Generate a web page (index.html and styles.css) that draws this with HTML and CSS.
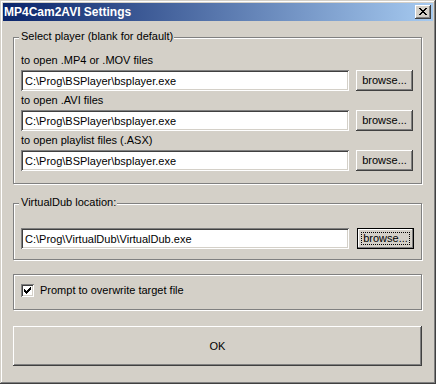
FILE: index.html
```html
<!DOCTYPE html>
<html lang="en">
  <head>
    <meta charset="UTF-8" />
    <title>MP4Cam2AVI Settings</title>
    <link rel="stylesheet" href="styles.css">
  </head>
  <body>
    <div class="window">
      <div class="titlebar">
        <span class="title">MP4Cam2AVI Settings</span>
        <button class="close" type="button" aria-label="Close">
          <svg width="8" height="7" viewBox="0 0 8 7" shape-rendering="crispEdges">
            <path d="M0 0h2v1H0zM6 0h2v1H6zM1 1h2v1H1zM5 1h2v1H5zM2 2h4v1H2zM3 3h2v1H3zM2 4h4v1H2zM1 5h2v1H1zM5 5h2v1H5zM0 6h2v1H0zM6 6h2v1H6z" fill="#000" />
          </svg>
        </button>
      </div>

      <div class="content">
        <div class="group group-player">
          <span class="legend">Select player (blank for default)</span>
          <div class="field">
            <label for="mp4-player">to open .MP4 or .MOV files</label>
            <div class="row">
              <input class="path" id="mp4-player" type="text" value="C:\Prog\BSPlayer\bsplayer.exe" />
              <button class="btn browse" type="button">browse...</button>
            </div>
          </div>
          <div class="field">
            <label for="avi-player">to open .AVI files</label>
            <div class="row">
              <input class="path" id="avi-player" type="text" value="C:\Prog\BSPlayer\bsplayer.exe" />
              <button class="btn browse" type="button">browse...</button>
            </div>
          </div>
          <div class="field">
            <label for="asx-player">to open playlist files (.ASX)</label>
            <div class="row">
              <input class="path" id="asx-player" type="text" value="C:\Prog\BSPlayer\bsplayer.exe" />
              <button class="btn browse" type="button">browse...</button>
            </div>
          </div>
        </div>

        <div class="group group-vdub">
          <span class="legend">VirtualDub location:</span>
          <div class="row">
            <input class="path" id="vdub" type="text" value="C:\Prog\VirtualDub\VirtualDub.exe" />
            <button class="btn browse focused" type="button">browse...</button>
          </div>
        </div>

        <div class="group group-prompt">
          <label class="check">
            <span class="box">
              <svg width="7" height="7" viewBox="0 0 7 7" shape-rendering="crispEdges">
                <path d="M0 2h1v3H0zM1 3h1v3H1zM2 4h1v3H2zM3 3h1v3H3zM4 2h1v3H4zM5 1h1v3H5zM6 0h1v3H6z" fill="#000" />
              </svg>
            </span>
            Prompt to overwrite target file
          </label>
        </div>

        <button class="btn ok" type="button">OK</button>
      </div>
    </div>
  </body>
</html>
```

FILE: styles.css
```css
* {
  margin: 0;
  padding: 0;
  box-sizing: border-box;
}

body {
  font-family: "Liberation Sans", Arial, sans-serif;
  font-size: 11px;
  color: #000;
  background: #d4d0c8;
}

.window {
  width: 436px;
  height: 384px;
  padding: 3px;
  background: #d4d0c8;
  box-shadow: inset -1px -1px #404040, inset 1px 1px #d4d0c8,
    inset -2px -2px #808080, inset 2px 2px #fff;
  display: flex;
  flex-direction: column;
}

.titlebar {
  height: 18px;
  display: flex;
  align-items: center;
  justify-content: space-between;
  padding: 0 2px 0 1px;
  background: linear-gradient(to right, #0a246a, #a6caf0);
}

.title {
  color: #fff;
  font-weight: bold;
  font-size: 12px;
}

.close {
  width: 16px;
  height: 14px;
  border: none;
  background: #d4d0c8;
  box-shadow: inset -1px -1px #404040, inset 1px 1px #fff,
    inset -2px -2px #808080;
  display: flex;
  align-items: center;
  justify-content: center;
  padding: 0 1px 1px 0;
}

.close svg {
  display: block;
}

.content {
  flex: 1;
  display: flex;
  flex-direction: column;
  padding: 16px 11px 0 10px;
}

/* etched group boxes */
.group {
  position: relative;
  border: 1px solid #808080;
  box-shadow: inset 1px 1px #fff, 1px 1px #fff;
  padding: 0 0 0 7px;
}

.legend {
  position: absolute;
  top: -8px;
  left: 5px;
  padding: 0 1px 0 2px;
  line-height: 13px;
  background: #d4d0c8;
}

.group-player {
  padding-top: 16px;
  padding-bottom: 12px;
  display: flex;
  flex-direction: column;
  gap: 3px;
}

.field label {
  display: block;
  line-height: 13px;
  height: 13px;
  margin-bottom: 3px;
}

.row {
  display: flex;
  align-items: center;
  gap: 7px;
}

.path {
  width: 328px;
  height: 21px;
  border: none;
  outline: none;
  padding: 0 3px 0 4px;
  font-family: inherit;
  font-size: 11px;
  color: #000;
  background: #fff;
  box-shadow: inset 1px 1px #808080, inset -1px -1px #fff,
    inset 2px 2px #404040, inset -2px -2px #d4d0c8;
}

.btn {
  border: none;
  font-family: inherit;
  font-size: 11px;
  color: #000;
  background: #d4d0c8;
  box-shadow: inset -1px -1px #404040, inset 1px 1px #fff,
    inset -2px -2px #808080;
}

.browse {
  width: 57px;
  height: 21px;
  padding-bottom: 1px;
}

.browse.focused {
  margin-left: 1px;
  box-shadow: inset 0 0 0 1px #000, inset -2px -2px #808080,
    inset 2px 2px #fff;
  outline: 1px dotted #000;
  outline-offset: -5px;
}

.group-vdub {
  margin-top: 19px;
  padding-top: 24px;
  padding-bottom: 10px;
}

.group-prompt {
  margin-top: 14px;
  padding-top: 8px;
  padding-bottom: 11px;
}

.check {
  display: flex;
  align-items: center;
  gap: 6px;
  line-height: 15px;
}

.box {
  width: 13px;
  height: 13px;
  background: #fff;
  box-shadow: inset 1px 1px #808080, inset -1px -1px #fff,
    inset 2px 2px #404040, inset -2px -2px #d4d0c8;
  display: flex;
  align-items: center;
  justify-content: center;
}

.box svg {
  display: block;
}

.ok {
  margin-top: 16px;
  height: 40px;
  width: 409px;
  font-size: 11px;
}
```
